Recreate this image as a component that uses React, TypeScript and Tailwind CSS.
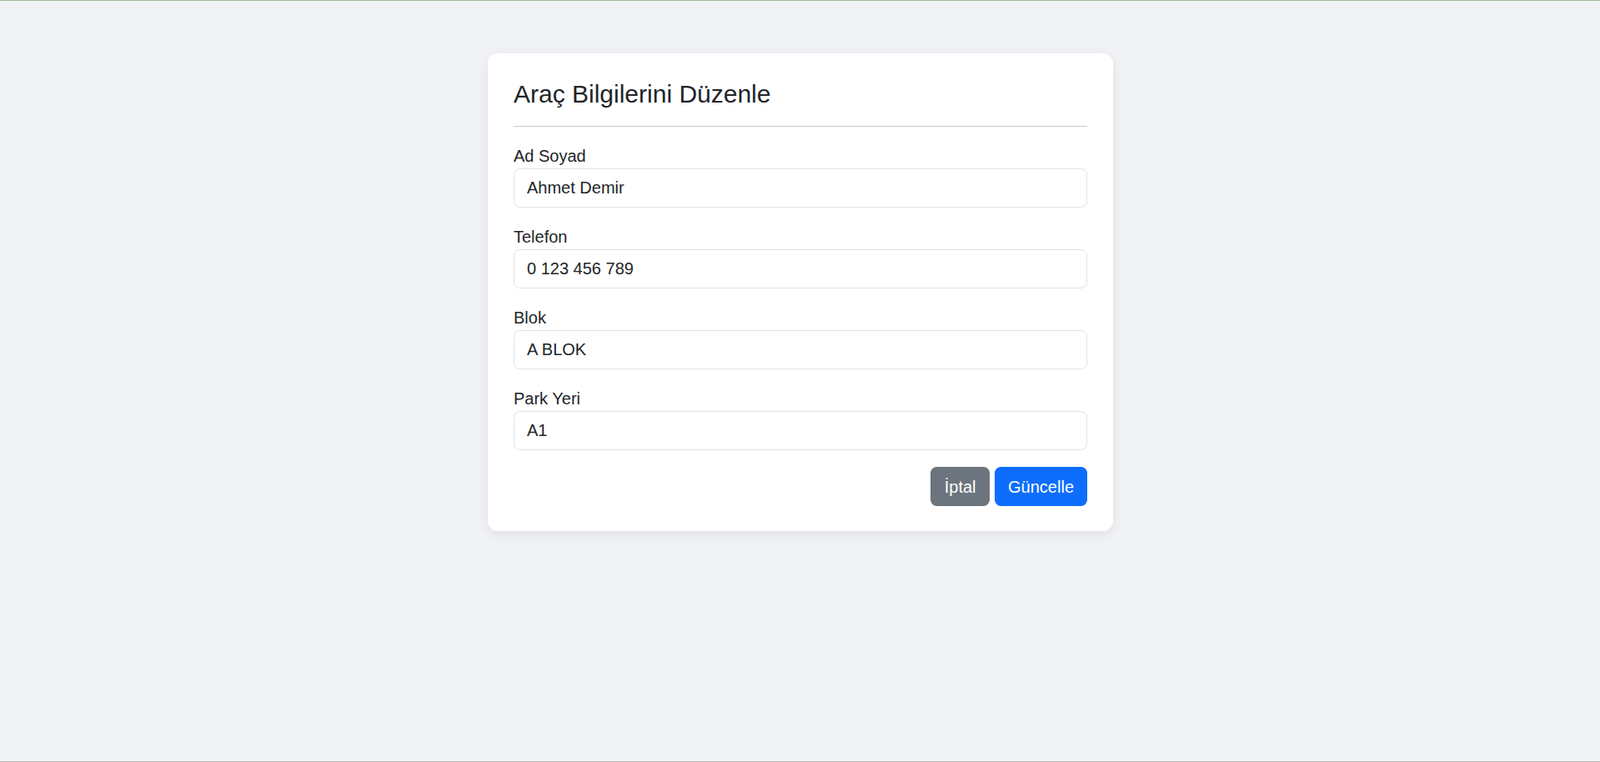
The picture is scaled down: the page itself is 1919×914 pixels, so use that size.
import React from "react";

const fields = [
  { label: "Ad Soyad", value: "Ahmet Demir" },
  { label: "Telefon", value: "0 123 456 789" },
  { label: "Blok", value: "A BLOK" },
  { label: "Park Yeri", value: "A1" },
];

export default function App() {
  return (
    <div
      className="h-screen bg-[#f0f2f5] border-t border-t-[#9fb79f] border-b border-b-[#b9b9b9] text-[#212529]"
      style={{ fontFamily: '"Liberation Sans", Arial, sans-serif' }}
    >
      <div className="pt-[63px] flex justify-center">
        <div className="w-[750px] ml-[1px] bg-white rounded-[12px] px-[31px] pt-[31px] pb-[30px] shadow-[0_4px_14px_rgba(0,0,0,0.08)]">
          <h4 className="text-[30px] leading-[36px] font-normal">Araç Bilgilerini Düzenle</h4>
          <hr className="mt-[20px] mb-[20px] border-t border-[#cbcccd]" />
          <form className="flex flex-col">
            {fields.map((f) => (
              <div key={f.label} className="mb-[20px]">
                <label className="block text-[20px] leading-[30px]">{f.label}</label>
                <input
                  defaultValue={f.value}
                  className="block w-full h-[47px] px-[15px] text-[20px] leading-[30px] text-[#212529] border border-[#dee2e6] rounded-[7.5px] bg-white outline-none"
                />
              </div>
            ))}
            <div className="flex justify-end gap-[6px]">
              <button
                type="button"
                className="h-[47px] px-[16.5px] text-[20px] leading-[30px] text-white bg-[#6c757d] rounded-[7.5px]"
              >
                İptal
              </button>
              <button
                type="submit"
                className="h-[47px] px-[16px] text-[20px] leading-[30px] text-white bg-[#0d6efd] rounded-[7.5px]"
              >
                Güncelle
              </button>
            </div>
          </form>
        </div>
      </div>
    </div>
  );
}
